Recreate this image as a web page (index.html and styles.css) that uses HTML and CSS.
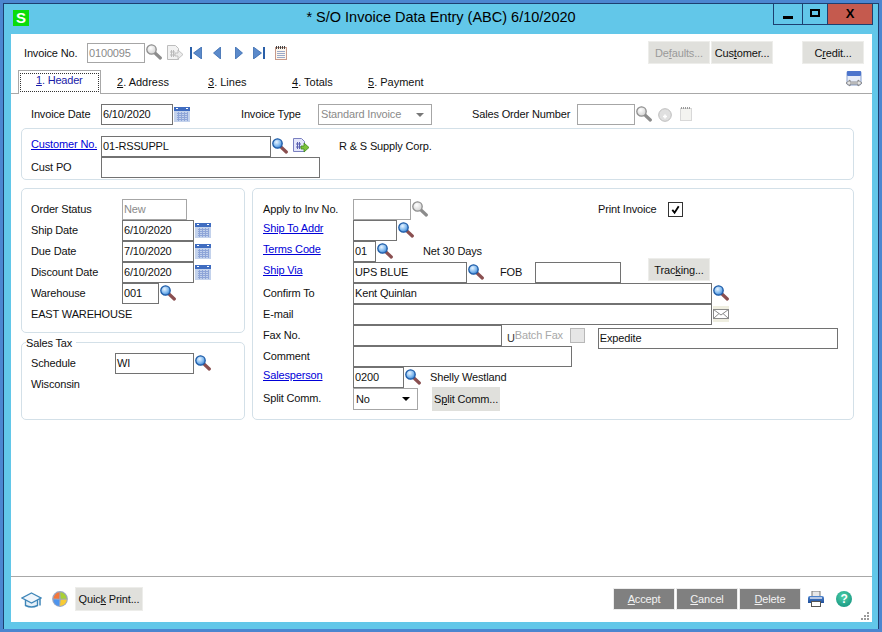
FILE: index.html
```html
<!DOCTYPE html>
<html lang="en">
<head>
<meta charset="utf-8">
<title>S/O Invoice Data Entry</title>
<link rel="stylesheet" href="styles.css">
</head>
<body>
<svg class="defs" aria-hidden="true">
  <defs>
    <radialGradient id="lens" cx="40%" cy="35%" r="70%"><stop offset="0" stop-color="#eaf5ff"/><stop offset=".6" stop-color="#7fb8ee"/><stop offset="1" stop-color="#2f78cc"/></radialGradient>
    <radialGradient id="lensg" cx="40%" cy="35%" r="70%"><stop offset="0" stop-color="#fff"/><stop offset="1" stop-color="#d0d0d0"/></radialGradient>
    <linearGradient id="pr" x1="0" y1="0" x2="0" y2="1"><stop offset="0" stop-color="#4f86d0"/><stop offset="1" stop-color="#1f4f9a"/></linearGradient>
    <symbol id="s-blue" viewBox="0 0 16 16"><line x1="9.500" y1="9.500" x2="14.300" y2="14" stroke="#8a4f50" stroke-width="3.200" stroke-linecap="round"/><circle cx="5.500" cy="5.500" r="4.700" fill="url(#lens)" stroke="#1c5aa6" stroke-width="1.300"/></symbol>
    <symbol id="s-gray" viewBox="0 0 16 16"><line x1="9.500" y1="9.500" x2="14.300" y2="14" stroke="#8c8c8c" stroke-width="3.200" stroke-linecap="round"/><circle cx="5.500" cy="5.500" r="4.700" fill="url(#lensg)" stroke="#8e8e8e" stroke-width="1.300"/></symbol>
    <symbol id="cal" viewBox="0 0 16 15"><rect x="0" y="0" width="16" height="15" fill="#c3d2ec"/><rect x="0" y="0" width="16" height="4" fill="#3f6cc0"/><rect x="2" y="1" width="2" height="1" fill="#fff"/><rect x="12" y="1" width="2" height="1" fill="#fff"/><path d="M3 6.500h11M3 8.500h11M3 10.500h11M3 12.500h11M4.500 5v9M7.500 5v9M10.500 5v9M13.500 5v9" stroke="#8ea5d8" fill="none"/></symbol>
    <symbol id="doc-blue" viewBox="0 0 16 16"><path d="M.5.500h8l3 3v10h-11z" fill="#e4e6fa" stroke="#7a80c0"/><path d="M3 6h5M3 9h5M4.500 4v7M6.500 4v7" stroke="#5a60b0" fill="none"/><path d="M8 8h3V5l5 4.500-5 4.500v-3H8z" fill="#7cc23a" stroke="#3f8a1a" stroke-width=".8"/></symbol>
    <symbol id="doc-gray" viewBox="0 0 16 16"><path d="M.5.500h8l3 3v11h-11z" fill="#f2f2f2" stroke="#bdbdbd"/><path d="M3 7h5M3 10h5M4.500 5v7M6.500 5v7" stroke="#bbb" fill="none"/><path d="M8 8h3V5l5 4.500-5 4.500v-3H8z" fill="#ececec" stroke="#b5b5b5" stroke-width=".8"/></symbol>
    <symbol id="first" viewBox="0 0 12 12"><rect x="0" y="0" width="2" height="12" fill="#2a5fa8"/><path d="M11.500 0v12L3.500 6z" fill="#5b8acb" stroke="#2a5fa8" stroke-width=".7"/></symbol>
    <symbol id="prev" viewBox="0 0 8 12"><path d="M7.500 0v12L.5 6z" fill="#5b8acb" stroke="#2a5fa8" stroke-width=".7"/></symbol>
    <symbol id="next" viewBox="0 0 8 12"><path d="M.5 0v12L7.500 6z" fill="#5b8acb" stroke="#2a5fa8" stroke-width=".7"/></symbol>
    <symbol id="last" viewBox="0 0 12 12"><rect x="10" y="0" width="2" height="12" fill="#2a5fa8"/><path d="M.5 0v12L8.500 6z" fill="#5b8acb" stroke="#2a5fa8" stroke-width=".7"/></symbol>
    <symbol id="note" viewBox="0 0 12 14"><rect x=".5" y="1.500" width="11" height="12" fill="#fdf6ee" stroke="#c89a8a"/><path d="M2 5.500h8M2 7.500h8M2 9.500h8M2 11.500h8" stroke="#9aa8c8"/><path d="M1.500 0v3M3.500 0v3M5.500 0v3M7.500 0v3M9.500 0v3" stroke="#444"/></symbol>
    <symbol id="note-g" viewBox="0 0 12 14"><rect x=".5" y="1.500" width="11" height="12" fill="#f3f3f0" stroke="#d8d8d8"/><path d="M1.500 0v2M3.500 0v2M5.500 0v2M7.500 0v2M9.500 0v2" stroke="#999"/></symbol>
    <symbol id="plus-g" viewBox="0 0 14 14"><circle cx="7" cy="7" r="6.300" fill="#e0e0e0" stroke="#bdbdbd"/><path d="M5 8.500h4M7 6.500v4" stroke="#fff" stroke-width="1.500"/></symbol>
    <symbol id="panel" viewBox="0 0 16 17"><rect x="1" y="0" width="14" height="14" rx="1.500" fill="#e6ecf8" stroke="#8aa0cc"/><rect x="1" y="0" width="14" height="5" rx="1" fill="#4c74cc"/><path d="M0 12l4-3v2h8V9l4 3-4 3v-2H4v2z" fill="#e4e4e4" stroke="#777" stroke-width=".8"/></symbol>
    <symbol id="mail" viewBox="0 0 16 16"><rect x="0" y="0" width="16" height="16" fill="#efeee0"/><rect x=".5" y="3.500" width="15" height="9" fill="#fff" stroke="#8a8a8a"/><path d="M.5 3.500L8 9l7.500-5.500M.5 12.500L6 7.500M15.500 12.500L10 7.500" stroke="#8a8a8a" fill="none"/></symbol>
    <symbol id="cap" viewBox="0 0 21 16"><path d="M4.500 6.500v7q6 3 12 0v-7" fill="#e6f0f8" stroke="#3f86b8" stroke-width="1.400"/><path d="M10.500 1L20 6l-9.500 5L1 6z" fill="#f0f6fc" stroke="#3f86b8" stroke-width="1.400"/><path d="M19 6.500v7" stroke="#3f86b8" stroke-width="1.500"/></symbol>
    <symbol id="ball" viewBox="0 0 16 16"><circle cx="8" cy="8" r="7.900" fill="#9aa6c0"/><path d="M7.600 1.200Q2.800 1.500 1.300 7.600L7.300 7.700z" fill="#f4763a"/><path d="M8.300 1.200q5 .5 6.500 6.300L8.700 7.700z" fill="#a9d034"/><path d="M1.300 8.400L7.300 8.700l-.3 6.200Q2 14 1.300 8.400z" fill="#4d94ee"/><path d="M8.700 8.700l6.100-.3Q14.300 14 8 14.900z" fill="#f8cb34"/></symbol>
    <symbol id="printer" viewBox="0 0 16 16"><rect x="4" y="0" width="8" height="6" fill="#e8e8e8" stroke="#777"/><path d="M0 7q0-2 2-2h12q2 0 2 2v5H0z" fill="url(#pr)"/><rect x="2" y="6" width="12" height="2" fill="#b8c8e4"/><rect x="3.500" y="10.500" width="9" height="5" fill="#fff" stroke="#555"/></symbol>
    <symbol id="grip" viewBox="0 0 10 10"><path d="M7 1h2v2H7zM4 4h2v2H4zM7 4h2v2H7zM1 7h2v2H1zM4 7h2v2H4zM7 7h2v2H7z" fill="#9a9a9a"/></symbol>
  </defs>
</svg>

<div class="window">
  <header class="titlebar">
    <div class="title-left"><span class="app-s">S</span></div>
    <div class="title">* S/O Invoice Data Entry (ABC) 6/10/2020</div>
    <div class="controls">
      <div class="ctl ctl-min"><span class="glyph-min"></span></div>
      <div class="ctl ctl-max"><span class="glyph-max"></span></div>
      <div class="ctl ctl-close">X</div>
    </div>
  </header>

  <main class="client">
    <div class="toolbar">
      <span class="tb-label">Invoice No.</span>
      <div class="field off w58 h20">0100095</div>
      <svg class="ic i16 ml1 mt1"><use href="#s-gray"/></svg>
      <svg class="ic i16 ml5 mt2"><use href="#doc-gray"/></svg>
      <svg class="ic nav12 ml7 mt4"><use href="#first"/></svg>
      <svg class="ic nav8 ml11 mt4"><use href="#prev"/></svg>
      <svg class="ic nav8 ml14 mt4"><use href="#next"/></svg>
      <svg class="ic nav12 ml10 mt4"><use href="#last"/></svg>
      <svg class="ic note ml10 mt3"><use href="#note"/></svg>
      <div class="tb-right">
        <div class="btn btn-off">De<u>f</u>aults...</div>
        <div class="btn">Cus<u>t</u>omer...</div>
        <div class="btn ml28">C<u>r</u>edit...</div>
      </div>
    </div>

    <nav class="tabs">
      <div class="tab-active"><span class="tab-focus"><u>1</u>. Header</span></div>
      <div class="tab t2"><u>2</u>. Address</div>
      <div class="tab t3"><u>3</u>. Lines</div>
      <div class="tab t4"><u>4</u>. Totals</div>
      <div class="tab t5"><u>5</u>. Payment</div>
      <svg class="tab-icon"><use href="#panel"/></svg>
    </nav>

    <section class="body">
      <div class="row head-row">
        <span class="lbl w70">Invoice Date</span>
        <div class="field w72">6/10/2020</div>
        <svg class="ic cal ml1 mt3"><use href="#cal"/></svg>
        <span class="lbl w77 ml51">Invoice Type</span>
        <div class="field off w114 sel">Standard Invoice<i class="arrow arrow-g"></i></div>
        <span class="lbl w105 ml40">Sales Order Number</span>
        <div class="field off w58"></div>
        <svg class="ic i16 ml1 mt2"><use href="#s-gray"/></svg>
        <svg class="ic i14 ml6 mt4"><use href="#plus-g"/></svg>
        <svg class="ic note ml8 mt3"><use href="#note-g"/></svg>
      </div>

      <div class="panel cust">
        <div class="row">
          <a class="lbl lnk w70">Customer No.</a>
          <div class="field w170">01-RSSUPPL</div>
          <svg class="ic i16 ml1 mt2"><use href="#s-blue"/></svg>
          <svg class="ic i16 ml5 mt2"><use href="#doc-blue"/></svg>
          <span class="lbl ml30">R &amp; S Supply Corp.</span>
        </div>
        <div class="row">
          <span class="lbl w70">Cust PO</span>
          <div class="field w219"></div>
        </div>
      </div>

      <div class="columns">
        <div class="left-col">
          <div class="panel order">
            <div class="row"><span class="lbl w91">Order Status</span><div class="field off w65 gray">New</div></div>
            <div class="row"><span class="lbl w91">Ship Date</span><div class="field w72">6/10/2020</div><svg class="ic cal ml1 mt3"><use href="#cal"/></svg></div>
            <div class="row"><span class="lbl w91">Due Date</span><div class="field w72">7/10/2020</div><svg class="ic cal ml1 mt3"><use href="#cal"/></svg></div>
            <div class="row"><span class="lbl w91">Discount Date</span><div class="field w72">6/10/2020</div><svg class="ic cal ml1 mt3"><use href="#cal"/></svg></div>
            <div class="row"><span class="lbl w91">Warehouse</span><div class="field w37">001</div><svg class="ic i16 ml1 mt2"><use href="#s-blue"/></svg></div>
            <div class="row"><span class="lbl">EAST WAREHOUSE</span></div>
          </div>
          <div class="panel tax">
            <div class="legend">Sales Tax</div>
            <div class="row"><span class="lbl w84">Schedule</span><div class="field w79">WI</div><svg class="ic i16 ml1 mt2"><use href="#s-blue"/></svg></div>
            <div class="row"><span class="lbl">Wisconsin</span></div>
          </div>
        </div>

        <div class="panel right">
          <div class="row">
            <span class="lbl w90">Apply to Inv No.</span>
            <div class="field off w58"></div>
            <svg class="ic i16 ml1 mt2"><use href="#s-gray"/></svg>
            <span class="lbl ml170 w70">Print Invoice</span>
            <div class="check mt3"><svg viewBox="0 0 12 12"><path d="M2.500 6.500l2.500 3 4.500-7" fill="none" stroke="#000" stroke-width="2"/></svg></div>
          </div>
          <div class="row"><a class="lbl lnk w90">Ship To Addr</a><div class="field w44"></div><svg class="ic i16 ml1 mt2"><use href="#s-blue"/></svg></div>
          <div class="row"><a class="lbl lnk w90">Terms Code</a><div class="field w23">01</div><svg class="ic i16 ml1 mt2"><use href="#s-blue"/></svg><span class="lbl ml30">Net 30 Days</span></div>
          <div class="row">
            <a class="lbl lnk w90">Ship Via</a>
            <div class="field w114">UPS BLUE</div>
            <svg class="ic i16 ml1 mt2"><use href="#s-blue"/></svg>
            <span class="lbl w35 ml16">FOB</span>
            <div class="field w86"></div>
            <div class="btn track">Trac<u>k</u>ing...</div>
          </div>
          <div class="row"><span class="lbl w90">Confirm To</span><div class="field w359">Kent Quinlan</div><svg class="ic i16 ml1 mt2"><use href="#s-blue"/></svg></div>
          <div class="row"><span class="lbl w90">E-mail</span><div class="field w359"></div><svg class="ic i16 ml1 mt2"><use href="#mail"/></svg></div>
          <div class="row">
            <span class="lbl w90">Fax No.</span>
            <div class="field w149"></div>
            <span class="lbl ml5 u-mark">U</span>
            <span class="lbl batch">Batch Fax</span>
            <div class="check check-off mt3"></div>
            <div class="field w240 expedite">Expedite</div>
          </div>
          <div class="row"><span class="lbl w90">Comment</span><div class="field w219"></div></div>
          <div class="row"><a class="lbl lnk w90">Salesperson</a><div class="field w51">0200</div><svg class="ic i16 ml1 mt2"><use href="#s-blue"/></svg><span class="lbl ml9">Shelly Westland</span></div>
          <div class="row">
            <span class="lbl w90">Split Comm.</span>
            <div class="field off w65 sel h22 ink">No<i class="arrow"></i></div>
            <div class="btn split">S<u>p</u>lit Comm...</div>
          </div>
        </div>
      </div>
    </section>

    <footer class="footer">
      <svg class="ic cap-i"><use href="#cap"/></svg>
      <svg class="ic i16 ml10"><use href="#ball"/></svg>
      <div class="btn ml7 quick">Quic<u>k</u> Print...</div>
      <div class="actions">
        <div class="btn-dark"><u>A</u>ccept</div>
        <div class="btn-dark"><u>C</u>ancel</div>
        <div class="btn-dark"><u>D</u>elete</div>
      </div>
      <svg class="ic i16 ml7"><use href="#printer"/></svg>
      <div class="help ml12">?</div>
      <svg class="grip"><use href="#grip"/></svg>
    </footer>
  </main>
</div>
</body>
</html>
```

FILE: styles.css
```css
* { box-sizing: border-box; }
html, body { margin: 0; padding: 0; }
body { width: 882px; height: 632px; overflow: hidden; background: #4b86d0; font: 11px/21px "Liberation Sans", Arial, sans-serif; letter-spacing: -.15px; color: #111; }
.defs { display: block; width: 0; height: 0; }
svg { display: block; flex: none; }

.window { width: 876px; height: 626px; margin: 3px 0 0 3px; border: solid #1d3f70; border-width: 1px 1px 0 1px; background: #62c7e9; display: flex; flex-direction: column; }
.titlebar { height: 30px; display: grid; grid-template-columns: 1fr auto 1fr; flex: none; }
.title-left { padding: 6px 0 0 9px; }
.app-s { display: block; width: 16px; height: 16px; background: #0bdc0b; color: #fff; font: bold 15px/16px "Liberation Sans", sans-serif; text-align: center; }
.title { font-size: 14.500px; letter-spacing: 0; line-height: 26px; color: #000; }
.controls { display: flex; justify-self: end; margin: -1px 5px 0 0; height: 22px; border: 1px solid #1d3f70; }
.ctl { height: 20px; display: flex; align-items: center; justify-content: center; border-left: 1px solid #1d3f70; }
.ctl-min { width: 28px; border-left: 0; }
.ctl-max { width: 25px; }
.ctl-close { width: 45px; background: #c55a4e; color: #000; font: bold 13px/20px "Liberation Sans", sans-serif; border-left: 1px solid #1d3f70; }
.glyph-min { display: block; width: 10px; height: 3px; background: #000; margin-top: 6px; }
.glyph-max { display: block; width: 10px; height: 8px; border: 2px solid #000; margin-bottom: 3px; }

.client { margin: 0 6px 0 7px; height: 588px; background: #fff; display: flex; flex-direction: column; flex: none; }

.toolbar { height: 36px; padding: 9px 8px 0 13px; display: flex; align-items: flex-start; flex: none; }
.tb-label { width: 63px; line-height: 20px; }
.tb-right { margin-left: auto; display: flex; margin-top: -2px; gap: 1px; }
.btn { width: 62px; height: 23px; background: #e0e0dc; border: 1px solid #ededea; text-align: center; line-height: 22px; color: #111; flex: none; white-space: nowrap; }
.btn-off { color: #9a9a9a; }
.tb-right .ml28 { margin-left: 28px; }

.tabs { height: 24px; display: flex; border-bottom: 1px solid #a8a8a8; padding-left: 7px; flex: none; letter-spacing: 0; }
.tab-active { width: 83px; height: 24px; border: 1px solid #a8a8a8; border-bottom: 0; background: #fff; padding: 2px 1px 0; margin-bottom: -1px; }
.tab-focus { display: block; height: 19px; border: 1px dotted #333; padding-left: 15px; line-height: 13px; color: #1a1aa8; letter-spacing: -.2px; }
.tab { padding-left: 16px; line-height: 25px; }
.t2 { width: 91px; } .t3 { width: 84px; } .t4 { width: 76px; } .t5 { width: 80px; }
.tab-icon { width: 16px; height: 17px; margin: 1px 10px 0 auto; }

.body { flex: 1; padding: 10px 18px 0 10px; }
.row { display: flex; height: 21px; align-items: flex-start; }
.head-row { padding-left: 10px; height: 24px; }
.lbl { display: block; flex: none; line-height: 21px; white-space: nowrap; }
.lnk { color: #0000d8; text-decoration: underline; margin-top: -2px; cursor: pointer; }

.field { height: 21px; border: 1px solid #727272; padding: 0 2px 0 1px; line-height: 19px; background: #fff; color: #111; flex: none; white-space: nowrap; overflow: hidden; }
.off { border-color: #a6a6a6; color: #8a8a8a; }
.gray { color: #8a8a8a; }
.ink { color: #111; }
.sel { display: flex; justify-content: space-between; align-items: center; padding: 0 7px 0 2px; }
.arrow { display: block; width: 0; height: 0; border: 4px solid transparent; border-top: 4px solid #000; border-bottom: 0; }
.arrow-g { border-top-color: #777; }
.h20 { height: 20px; line-height: 18px; }
.h22 { height: 22px; }

.panel { border: 1px solid #d3e0e8; border-radius: 5px; background: #fff; }
.cust { height: 52px; padding: 7px 0 0 9px; }
.columns { display: flex; gap: 7px; margin-top: 8px; height: 232px; }
.left-col { width: 224px; flex: none; }
.order { height: 145px; padding: 10px 0 0 9px; }
.tax { height: 78px; margin-top: 9px; padding-left: 9px; }
.legend { width: fit-content; height: 14px; margin: -7px 0 3px -5px; padding: 0 4px 0 0; background: #fff; line-height: 14px; }
.right { width: 602px; flex: none; padding: 10px 0 0 10px; }

.ic { flex: none; }
.i16 { width: 16px; height: 16px; }
.i14 { width: 14px; height: 14px; }
.cal { width: 16px; height: 15px; }
.note { width: 12px; height: 14px; }
.nav12 { width: 12px; height: 12px; }
.nav8 { width: 8px; height: 12px; }

.check { width: 15px; height: 15px; border: 1px solid #333; flex: none; padding: 1px; }
.check svg { width: 11px; height: 11px; }
.check-off { border-color: #b8b8b8; background: #e6e6e6; }
.u-mark { margin-top: 3px; color: #333; }
.batch { width: 55px; color: #a8a8a8; }
.expedite { margin: 3px 0 0 13px; }
.track { margin: -4px 0 0 27px; }
.split { width: 68px; height: 24px; margin: -1px 0 0 14px; border-color: #e0e0dc; }
.quick { width: 68px; height: 24px; }

.footer { height: 46px; border-top: 1px solid #a8a8a8; padding: 10px 2px 0 10px; display: flex; align-items: flex-start; flex: none; }
.cap-i { width: 21px; height: 16px; margin-top: 5px; }
.footer .i16 { margin-top: 4px; }
.actions { margin-left: 470px; display: flex; gap: 1px; margin-top: 1px; }
.btn-dark { width: 62px; height: 22px; background: #808080; color: #f2f2f2; text-align: center; line-height: 22px; outline: 1px solid #ececec; outline-offset: -1px; }
.help { width: 16px; height: 16px; border-radius: 50%; margin-top: 4px; flex: none; background: radial-gradient(circle at 45% 35%, #4fd0a8, #0a8a7a); color: #fff; font: bold 12px/16px "Liberation Sans", sans-serif; text-align: center; }
.grip { width: 10px; height: 10px; margin: 24px 0 0 auto; }

.w23 { width: 23px; } .w35 { width: 35px; } .w37 { width: 37px; } .w44 { width: 44px; } .w51 { width: 51px; }
.w58 { width: 58px; } .w65 { width: 65px; } .w70 { width: 70px; }
.w72 { width: 72px; } .w77 { width: 77px; } .w79 { width: 79px; } .w84 { width: 84px; }
.w86 { width: 86px; } .w90 { width: 90px; } .w91 { width: 91px; } .w105 { width: 105px; }
.w114 { width: 114px; } .w149 { width: 149px; } .w170 { width: 170px; } .w219 { width: 219px; }
.w240 { width: 240px; } .w359 { width: 359px; }
.ml1 { margin-left: 1px; } .ml5 { margin-left: 5px; } .ml6 { margin-left: 6px; } .ml7 { margin-left: 7px; }
.ml8 { margin-left: 8px; } .ml9 { margin-left: 9px; } .ml10 { margin-left: 10px; } .ml11 { margin-left: 11px; }
.ml12 { margin-left: 12px; } .ml14 { margin-left: 14px; } .ml16 { margin-left: 16px; } .ml30 { margin-left: 30px; }
.ml40 { margin-left: 40px; } .ml51 { margin-left: 51px; } .ml170 { margin-left: 170px; }
.mt1 { margin-top: 1px; } .mt2 { margin-top: 2px; } .mt3 { margin-top: 3px; } .mt4 { margin-top: 4px; }
```
